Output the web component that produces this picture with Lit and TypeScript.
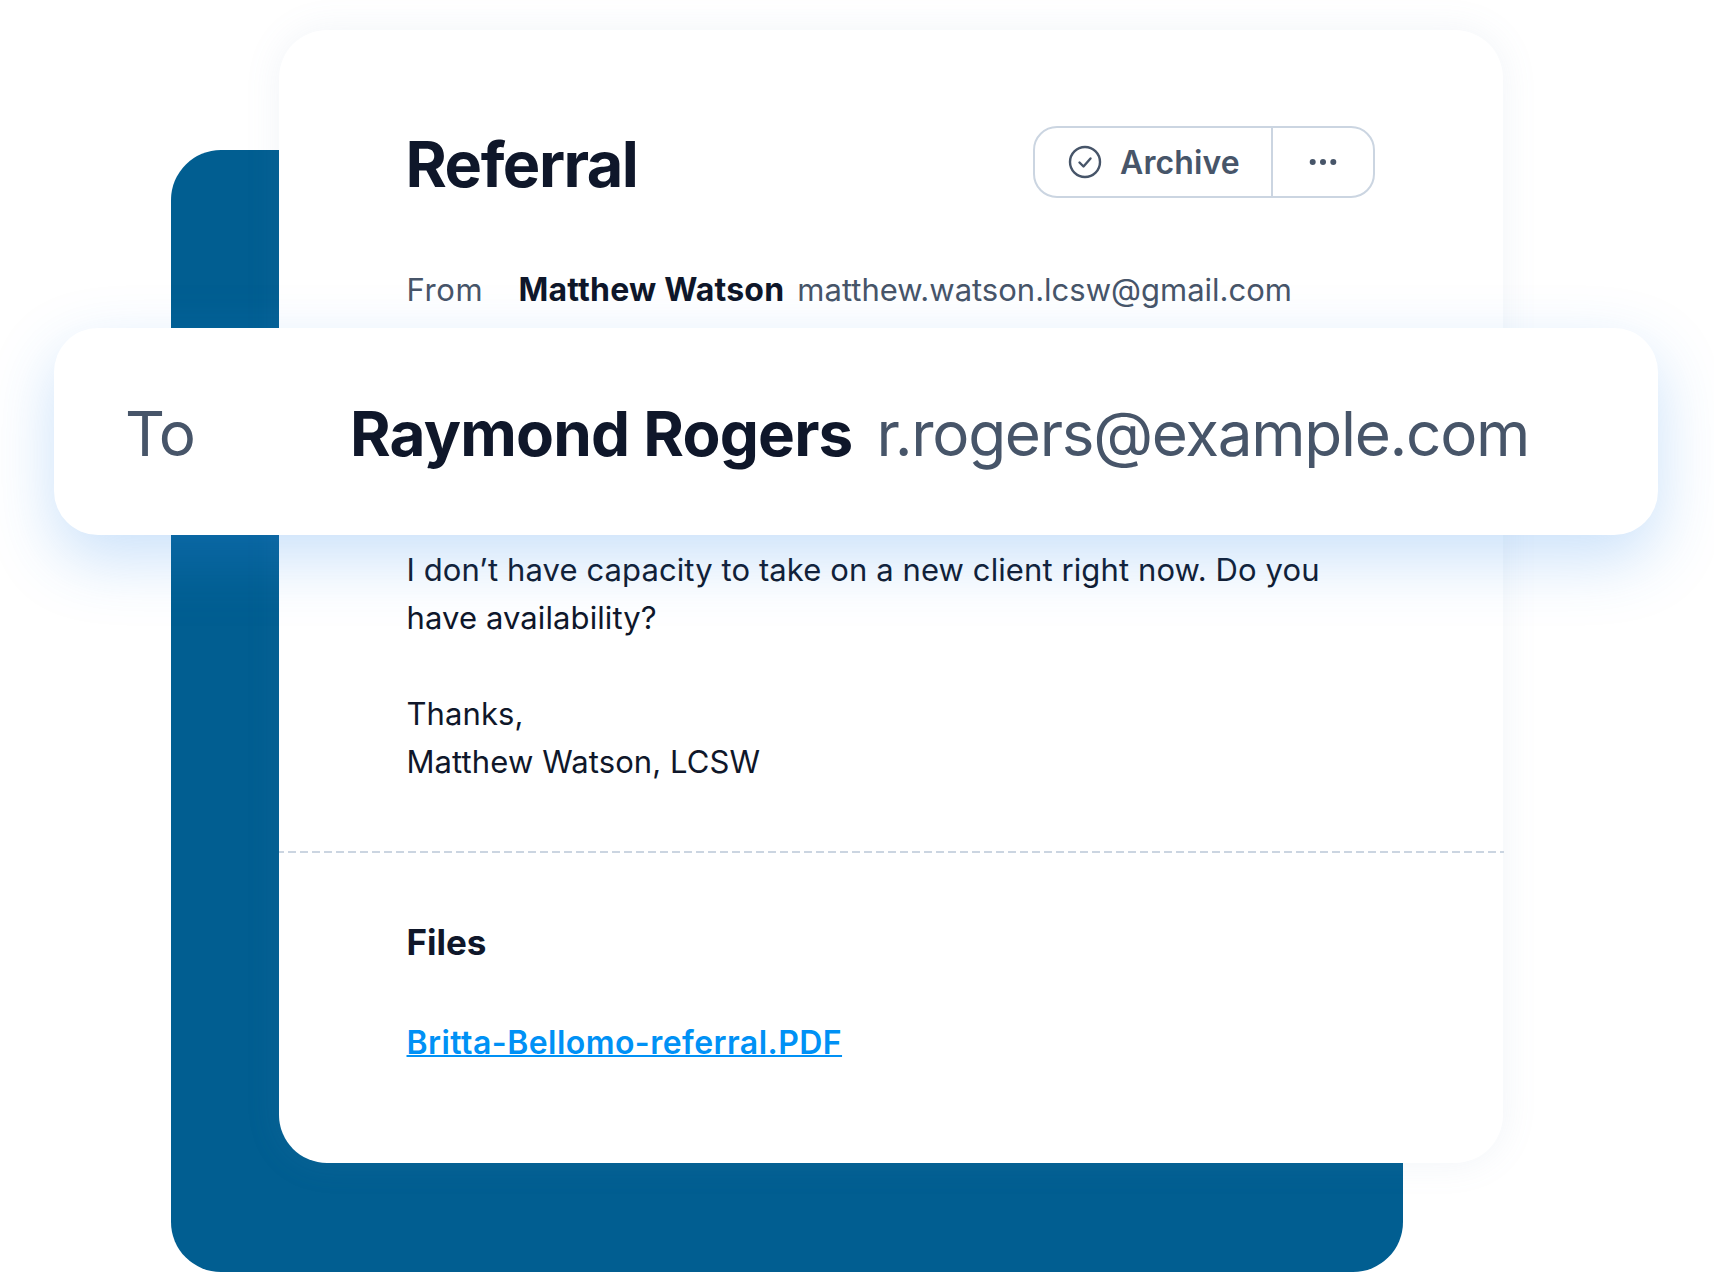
import { LitElement, html, css } from "lit";
import { customElement } from "lit/decorators.js";

@customElement("app-root")
export class AppRoot extends LitElement {
  static styles = css`
    :host {
      display: block;
      font-family: "Inter", "Liberation Sans", sans-serif;
      color: #0f172a;
      background: #fff;
    }
    .stage {
      position: relative;
      width: 1714px;
      height: 1272px;
      overflow: hidden;
      padding: 30px 211px 0 278.5px;
      box-sizing: border-box;
    }
    .backing {
      position: absolute;
      left: 170.5px;
      top: 150px;
      width: 1232px;
      height: 1122px;
      border-radius: 50px;
      background: #015e91;
    }
    .card {
      position: relative;
      height: 1133px;
      box-sizing: border-box;
      background: #fff;
      border-radius: 48px;
      box-shadow: 0 0 36px rgba(120, 145, 190, 0.1);
      padding: 96px 128px 0;
    }
    .head {
      display: flex;
      align-items: center;
      justify-content: space-between;
      height: 72px;
    }
    h1 {
      margin: 4px 0 0 -1px;
      font-size: 63px;
      line-height: 72px;
      font-weight: 700;
      letter-spacing: -1.5px;
    }
    .actions {
      display: flex;
      width: 342px;
      height: 72px;
      box-sizing: border-box;
      border: 2px solid #cbd5e1;
      border-radius: 24px;
      color: #475569;
    }
    .archive {
      width: 238px;
      box-sizing: border-box;
      display: flex;
      align-items: center;
      gap: 18px;
      padding-left: 33px;
      border-right: 2px solid #cbd5e1;
      font-size: 32px;
      font-weight: 600;
      letter-spacing: 0.1px;
    }
    .more {
      flex: 1;
      display: flex;
      align-items: center;
      justify-content: center;
    }
    .from {
      display: flex;
      align-items: baseline;
      margin-top: 72px;
      font-size: 31px;
      line-height: 40px;
      color: #475569;
    }
    .label { width: 112px; letter-spacing: 0.6px; }
    .name {
      font-weight: 700;
      color: #0f172a;
      font-size: 32px;
      letter-spacing: 0.2px;
      margin-right: 13px;
    }
    .body {
      margin: 236px 0 0;
      font-size: 31px;
      line-height: 48px;
      letter-spacing: 0.1px;
    }
    .body p { margin: 0 0 48px; }
    .rule {
      margin: 65px -128.5px 0 -127.5px;
      height: 2px;
      background: repeating-linear-gradient(90deg, #cbd5e1 0 8px, transparent 8px 12px);
      background-position: -3px 0;
    }
    h2 {
      margin: 67px 0 0;
      font-size: 35px;
      line-height: 44px;
      font-weight: 700;
    }
    a {
      display: inline-block;
      margin-top: 57px;
      font-size: 32px;
      line-height: 44px;
      font-weight: 600;
      letter-spacing: 0.45px;
      color: #0091f5;
      text-decoration-thickness: 2px;
    }
    .to {
      position: absolute;
      left: 54px;
      top: 328px;
      width: 1604px;
      height: 207px;
      box-sizing: border-box;
      display: flex;
      align-items: center;
      padding-left: 71px;
      background: #fff;
      border-radius: 44px;
      box-shadow: 0 24px 64px rgba(50, 140, 235, 0.26);
      font-size: 62px;
      color: #475569;
      line-height: 76px;
      letter-spacing: -1.3px;
      padding-top: 4px;
    }
    .to .label { width: 225px; letter-spacing: -1.5px; }
    .to .name { font-size: 62px; letter-spacing: -0.8px; margin-right: 24px; }
  `;

  render() {
    return html`
      <div class="stage">
        <div class="backing"></div>
        <section class="card">
          <header class="head">
            <h1>Referral</h1>
            <div class="actions">
              <div class="archive">
                <svg width="34" height="34" viewBox="0 0 34 34" fill="none" stroke="#475569" stroke-width="2.4" stroke-linecap="round" stroke-linejoin="round">
                  <circle cx="17" cy="17" r="15"></circle>
                  <path d="M11.5 17.5l4 4 7-8"></path>
                </svg>
                <span>Archive</span>
              </div>
              <div class="more">
                <svg width="30" height="8" viewBox="0 0 30 8" fill="#475569">
                  <circle cx="4.7" cy="4" r="3"></circle>
                  <circle cx="15" cy="4" r="3"></circle>
                  <circle cx="25.3" cy="4" r="3"></circle>
                </svg>
              </div>
            </div>
          </header>
          <div class="from">
            <span class="label">From</span>
            <span class="name">Matthew Watson</span>
            <span>matthew.watson.lcsw@gmail.com</span>
          </div>
          <div class="body">
            <p>I don’t have capacity to take on a new client right now. Do you have availability?</p>
            <p>Thanks,<br />Matthew Watson, LCSW</p>
          </div>
          <div class="rule"></div>
          <h2>Files</h2>
          <a href="#">Britta-Bellomo-referral.PDF</a>
        </section>
        <div class="to">
          <span class="label">To</span>
          <span class="name">Raymond Rogers</span>
          <span>r.rogers@example.com</span>
        </div>
      </div>
    `;
  }
}
